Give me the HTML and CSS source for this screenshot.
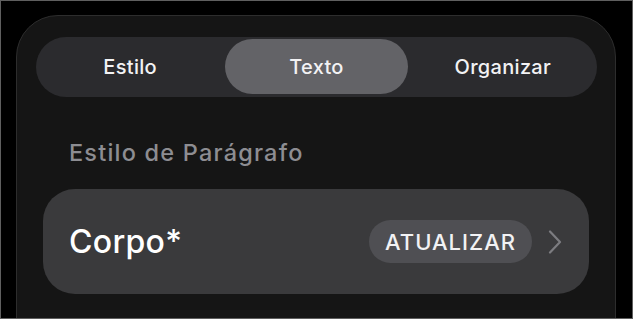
FILE: index.html
```html
<!DOCTYPE html>
<html lang="pt">
<head>
    <meta charset="UTF-8">
    <meta name="viewport" content="width=device-width, initial-scale=1.0">
    <title>Formatar</title>
    <link rel="stylesheet" href="styles.css">
</head>
<body>

    <div class="screen">
        <div class="panel">

            <!-- Tabs -->
            <div class="tabs">
                <div class="tab">Estilo</div>
                <div class="tab active">Texto</div>
                <div class="tab">Organizar</div>
            </div>

            <div class="section-title">Estilo de Parágrafo</div>

            <div class="style-row">
                <div class="style-name">Corpo*</div>
                <div class="update-btn">ATUALIZAR</div>
                <svg class="chevron" width="14" height="24" viewBox="0 0 14 24">
                    <path d="M2 1.5 L12 12 L2 22.5" fill="none" stroke="#7c7c80" stroke-width="2.2" stroke-linecap="round" stroke-linejoin="round"/>
                </svg>
            </div>

        </div>
    </div>

</body>
</html>
```

FILE: styles.css
```css
body {
    margin: 0;
    padding: 0;
    background-color: #000;
    font-family: Inter, "Noto Sans", sans-serif;
}
.screen {
    width: 631px;
    height: 317px;
    border: 1px solid #5f5f5f;
    background-color: #000;
    overflow: hidden;
}
.panel {
    margin: 14px 0 0 15px;
    width: 600px;
    height: 340px;
    box-sizing: border-box;
    padding: 21px 18px 0 19px;
    background-color: #151515;
    border: 1px solid #2d2d2d;
    border-radius: 42px 42px 0 0;
}
.tabs {
    display: grid;
    grid-template-columns: 1fr 1fr 1fr;
    gap: 4px;
    height: 60px;
    box-sizing: border-box;
    padding: 2px 3px 3px 3px;
    background-color: #2b2b2e;
    border-radius: 30px;
}
.tab {
    display: flex;
    align-items: center;
    justify-content: center;
    color: #f2f2f4;
    font-size: 20px;
    font-weight: 450;
    letter-spacing: 0.3px;
    border-radius: 28px;
}
.tab.active {
    background-color: #636367;
}
.section-title {
    margin: 42px 0 0 33px;
    color: #8d8d92;
    font-size: 23.5px;
    font-weight: 450;
    letter-spacing: 1.2px;
    line-height: 28px;
}
.style-row {
    display: flex;
    align-items: center;
    margin: 22px 8px 0 7px;
    height: 105px;
    padding: 0 27px 0 26px;
    background-color: #3a3a3c;
    border-radius: 32px;
}
.style-name {
    flex: 1;
    color: #fff;
    font-size: 32px;
    font-weight: 520;
    letter-spacing: 0.3px;
}
.update-btn {
    height: 43px;
    display: flex;
    align-items: center;
    padding: 0 16px;
    background-color: #4f4f53;
    border-radius: 22px;
    color: #f2f2f4;
    font-size: 22px;
    font-weight: 450;
    letter-spacing: 1px;
}
.chevron {
    margin-left: 16px;
}
```
